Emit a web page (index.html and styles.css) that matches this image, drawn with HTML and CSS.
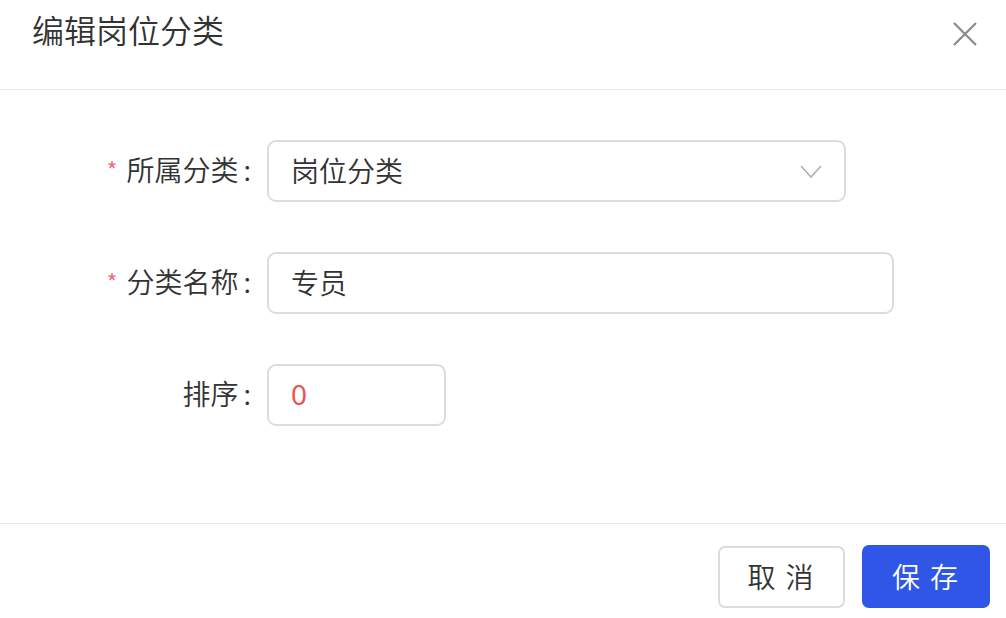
FILE: index.html
```html
<!DOCTYPE html>
<html lang="zh-CN">
<head>
    <meta charset="UTF-8">
    <meta name="viewport" content="width=device-width, initial-scale=1.0">
    <title>编辑岗位分类</title>
    <link rel="stylesheet" href="styles.css">
</head>
<body>
    <div class="dialog">
        <div class="dialog-header">
            <h2 class="dialog-title">编辑岗位分类</h2>
            <span class="dialog-close">
                <svg width="24" height="24" viewBox="0 0 24 24">
                    <path d="M1 1 L23 23 M23 1 L1 23" stroke="#8a8a8a" stroke-width="2.2" fill="none"/>
                </svg>
            </span>
        </div>

        <div class="dialog-body">
            <div class="form-row">
                <label class="form-label"><span class="required">*</span>所属分类<span class="colon">:</span></label>
                <div class="field field-select">
                    <span class="field-text">岗位分类</span>
                    <svg class="arrow" width="22" height="14" viewBox="0 0 22 14">
                        <path d="M1 1 L11 12 L21 1" stroke="#b0b0b0" stroke-width="1.6" fill="none"/>
                    </svg>
                </div>
            </div>
            <div class="form-row">
                <label class="form-label"><span class="required">*</span>分类名称<span class="colon">:</span></label>
                <div class="field field-name">
                    <span class="field-text">专员</span>
                </div>
            </div>
            <div class="form-row">
                <label class="form-label">排序<span class="colon">:</span></label>
                <div class="field field-sort">
                    <span class="field-text number">0</span>
                </div>
            </div>
        </div>

        <div class="dialog-footer">
            <button class="btn btn-cancel">取 消</button>
            <button class="btn btn-save">保 存</button>
        </div>
    </div>
</body>
</html>
```

FILE: styles.css
```css
body {
    margin: 0;
    padding: 0;
    background: #fff;
    font-family: "Noto Sans CJK SC", "Noto Sans", sans-serif;
    font-weight: 350;
    color: #333;
}

.dialog {
    width: 1006px;
    height: 618px;
    display: flex;
    flex-direction: column;
}

.dialog-header {
    height: 89px;
    border-bottom: 1px solid #ebebeb;
    display: flex;
    justify-content: space-between;
    align-items: flex-start;
    padding: 0 29px 0 32px;
}

.dialog-title {
    margin: 0;
    font-size: 32px;
    font-weight: 350;
    line-height: 32px;
    padding-top: 13px;
    color: #333;
}

.dialog-close {
    margin-top: 22px;
    display: flex;
}

.dialog-body {
    flex: 1;
    padding-top: 50px;
    display: flex;
    flex-direction: column;
    gap: 50px;
}

.form-row {
    display: flex;
    align-items: center;
}

.form-label {
    width: 251px;
    text-align: right;
    font-size: 28px;
    color: #333;
    margin-right: 16px;
    padding-bottom: 4px;
}

.colon {
    margin-left: 5px;
}

.required {
    color: #f56c6c;
    font-size: 24px;
    margin-right: 9px;
    position: relative;
    top: -1px;
}

.field {
    height: 62px;
    box-sizing: border-box;
    border: 2px solid #dcdcdc;
    border-radius: 9px;
    display: flex;
    align-items: center;
    justify-content: space-between;
    padding: 0 22px 0 22px;
}

.field-text {
    font-size: 28px;
    color: #333;
    padding-bottom: 3px;
}

.field-text.number {
    font-family: "Noto Sans", sans-serif;
    font-weight: 400;
    color: #f0524f;
}

.field-select {
    width: 579px;
}

.field-name {
    width: 627px;
}

.field-sort {
    width: 179px;
}

.arrow {
    margin-top: 2px;
}

.dialog-footer {
    height: 95px;
    border-top: 1px solid #ebebeb;
    display: flex;
    justify-content: flex-end;
    align-items: flex-start;
    gap: 17px;
    padding: 21px 16px 0 0;
    box-sizing: border-box;
}

.btn {
    height: 63px;
    font-family: "Noto Sans CJK SC", sans-serif;
    font-weight: 350;
    font-size: 28px;
    border-radius: 7px;
    cursor: pointer;
    letter-spacing: 2px;
    padding-bottom: 3px;
}

.btn-cancel {
    width: 127px;
    background: #fff;
    border: 2px solid #dcdcdc;
    color: #333;
    margin-top: 1px;
    height: 62px;
}

.btn-save {
    width: 128px;
    background: #3056e8;
    border: none;
    color: #fff;
}
```
